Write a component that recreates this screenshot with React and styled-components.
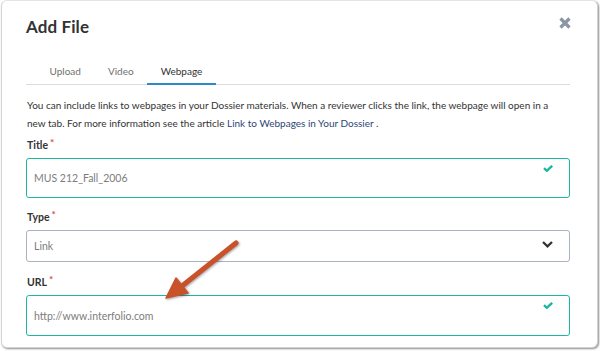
import React from "react";
import styled, { createGlobalStyle } from "styled-components";

const Global = createGlobalStyle`
  html, body { margin: 0; padding: 0; background: #ffffff; }
  body { font-family: Lato, "Open Sans", sans-serif; color: #333; }
  * { box-sizing: border-box; }
`;

const Page = styled.div`
  position: relative;
  width: 600px;
  height: 351px;
  overflow: hidden;
`;

const Modal = styled.div`
  margin: 0 2px 0 1px;
  height: 348px;
  background: #fff;
  border: 1px solid #d2d2d2;
  border-top-color: #e4e4e4;
  border-radius: 6px;
  box-shadow: 1px 1px 2px rgba(0, 0, 0, 0.45);
  padding: 16px 27px 0 24px;
  display: flex;
  flex-direction: column;
`;

const Header = styled.div`
  display: flex;
  align-items: flex-start;
  justify-content: space-between;
  height: 41px;
`;

const Heading = styled.h1`
  margin: 0;
  font-family: Lato, sans-serif;
  font-weight: 700;
  font-size: 17px;
  line-height: 20px;
  color: #333;
  letter-spacing: 0.1px;
`;

const CloseButton = styled.button`
  border: 0;
  background: none;
  padding: 0;
  margin: 0 -1px 0 0;
  width: 12px;
  height: 12px;
  display: flex;
  cursor: pointer;
`;

const TabList = styled.div`
  display: flex;
  padding-left: 10px;
  border-bottom: 1px solid #dcdcdc;
`;

const Tab = styled.div`
  padding: 4px 13.5px 3px;
  font-size: 10px;
  line-height: 18px;
  color: ${(p) => (p.$active ? "#333" : "#6f6f6f")};
  border-bottom: 2px solid ${(p) => (p.$active ? "#2b8ac6" : "transparent")};
  margin-bottom: -1px;
`;

const Intro = styled.p`
  margin: 11px 0 4px 1px;
  padding-right: 14px;
  font-size: 10px;
  line-height: 18px;
  color: #333;
`;

const Link = styled.span`
  color: #2d4675;
`;

const Label = styled.div`
  font-size: 10.5px;
  font-weight: 700;
  line-height: 18px;
  color: #333;
  margin: ${(p) => p.$mt || 0}px 0 4px 1px;
`;

const Req = styled.span`
  color: #e0494f;
  font-weight: 700;
  font-size: 10px;
  line-height: 0;
  margin-left: 2px;
  position: relative;
  top: -3px;
`;

const Field = styled.div`
  height: ${(p) => p.$h}px;
  border: 1px solid ${(p) => (p.$valid ? "#1db7a0" : "#aab2c0")};
  border-radius: 3px;
  display: flex;
  align-items: center;
  justify-content: space-between;
  padding: 0 16px 0 7px;
  font-size: 10.5px;
  color: #7d7d7d;
`;

const FieldText = styled.span`
  line-height: 18px;
`;

const FieldIcon = styled.span`
  align-self: ${(p) => (p.$top ? "flex-start" : "center")};
  margin-top: ${(p) => p.$mt || 0}px;
  display: flex;
`;

const ArrowLayer = styled.svg`
  position: absolute;
  left: 0;
  top: 0;
  pointer-events: none;
  filter: drop-shadow(1px 1px 1px rgba(0, 0, 0, 0.35));
`;

const Check = () => (
  <svg width="10" height="7" viewBox="0 0 10 7">
    <polyline points="1,3.2 3.8,5.8 9.2,0.8" fill="none" stroke="#1db7a0" strokeWidth="2.4" />
  </svg>
);

const Chevron = () => (
  <svg width="11" height="7" viewBox="0 0 11 7">
    <polyline points="1,1 5.5,5.3 10,1" fill="none" stroke="#333" strokeWidth="2.3" />
  </svg>
);

export default function App() {
  return (
    <Page>
      <Global />
      <Modal>
        <Header>
          <Heading>Add File</Heading>
          <CloseButton aria-label="Close">
            <svg width="12" height="12" viewBox="0 0 12 12">
              <path d="M1.5 1.5 L10.5 10.5 M10.5 1.5 L1.5 10.5" stroke="#8b95a4" strokeWidth="3.2" />
            </svg>
          </CloseButton>
        </Header>
        <TabList>
          <Tab>Upload</Tab>
          <Tab>Video</Tab>
          <Tab $active>Webpage</Tab>
        </TabList>
        <Intro>
          You can include links to webpages in your Dossier materials. When a reviewer clicks the link, the webpage will open in a new tab. For more information see the article <Link>Link to Webpages in Your Dossier</Link> .
        </Intro>
        <Label>
          Title<Req>*</Req>
        </Label>
        <Field $h={40} $valid>
          <FieldText>MUS 212_Fall_2006</FieldText>
          <FieldIcon $top $mt={6}>
            <Check />
          </FieldIcon>
        </Field>
        <Label $mt={10}>
          Type<Req>*</Req>
        </Label>
        <Field $h={32}>
          <FieldText>Link</FieldText>
          <FieldIcon $top $mt={10}>
            <Chevron />
          </FieldIcon>
        </Field>
        <Label $mt={11}>
          URL<Req>*</Req>
        </Label>
        <Field $h={41} $valid>
          <FieldText>http://www.interfolio.com</FieldText>
          <FieldIcon $top $mt={6}>
            <Check />
          </FieldIcon>
        </Field>
      </Modal>
      <ArrowLayer width="600" height="351" viewBox="0 0 600 351">
        <line x1="236" y1="243" x2="182" y2="286" stroke="#c9522b" strokeWidth="5" strokeLinecap="round" />
        <polygon points="166,298 188,293 176,278" fill="#c9522b" stroke="#c9522b" strokeWidth="1.5" strokeLinejoin="round" />
      </ArrowLayer>
    </Page>
  );
}
